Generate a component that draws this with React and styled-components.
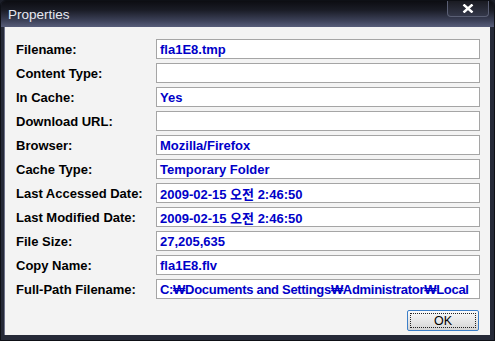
import React from 'react';
import styled, { createGlobalStyle } from 'styled-components';

const GlobalStyle = createGlobalStyle`
  html, body {
    margin: 0;
    padding: 0;
    background: #1c1f2a;
  }
`;

const fields = [
  { label: 'Filename:', value: 'fla1E8.tmp' },
  { label: 'Content Type:', value: '' },
  { label: 'In Cache:', value: 'Yes' },
  { label: 'Download URL:', value: '' },
  { label: 'Browser:', value: 'Mozilla/Firefox' },
  { label: 'Cache Type:', value: 'Temporary Folder' },
  { label: 'Last Accessed Date:', value: '2009-02-15 오전 2:46:50' },
  { label: 'Last Modified Date:', value: '2009-02-15 오전 2:46:50' },
  { label: 'File Size:', value: '27,205,635' },
  { label: 'Copy Name:', value: 'fla1E8.flv' },
  { label: 'Full-Path Filename:', value: 'C:₩Documents and Settings₩Administrator₩Local', condensed: true },
];

function App() {
  return (
    <>
      <GlobalStyle />
      <Window>
        <TitleBar>
          <Title>Properties</Title>
          <CloseButton>
            <svg width="12" height="9" viewBox="0 0 12 9">
              <path d="M1.5 0.5 L10.5 8.5 M10.5 0.5 L1.5 8.5" stroke="#fff" strokeWidth="2.4" />
            </svg>
          </CloseButton>
        </TitleBar>
        <Body>
          <FieldGrid>
            {fields.map((f) => (
              <React.Fragment key={f.label}>
                <Label>{f.label}</Label>
                <ValueBox $condensed={f.condensed}>{f.value}</ValueBox>
              </React.Fragment>
            ))}
          </FieldGrid>
          <Footer>
            <OkButton>
              <span>OK</span>
            </OkButton>
          </Footer>
        </Body>
      </Window>
    </>
  );
}

export default App;

const Window = styled.div`
  width: 495px;
  height: 341px;
  box-sizing: border-box;
  display: flex;
  flex-direction: column;
  background: #262a38;
  border: 1px solid #0e1016;
  border-radius: 6px 6px 0 0;
  overflow: hidden;
  font-family: 'Liberation Sans', 'Noto Sans CJK KR', sans-serif;
`;

const TitleBar = styled.div`
  height: 26px;
  flex: none;
  display: flex;
  align-items: flex-start;
  justify-content: space-between;
  background: linear-gradient(to bottom, #0c0d12 0%, #1a1c26 35%, #3c4158 75%, #575d7a 100%);
  padding: 0 5px 0 7px;
`;

const Title = styled.span`
  margin-top: 6px;
  color: #e6e8f0;
  font-size: 13.5px;
`;

const CloseButton = styled.div`
  width: 42px;
  height: 16px;
  box-sizing: border-box;
  display: flex;
  align-items: center;
  justify-content: center;
  background: linear-gradient(to bottom, #1a1b22, #34384a);
  border: 1px solid #5a5f74;
  border-top: none;
  border-radius: 0 0 4px 4px;
`;

const Body = styled.div`
  flex: 1;
  margin: 0 4px 5px 3px;
  background: #f3f3f3;
  border-left: 1px solid #6c7088;
  display: flex;
  flex-direction: column;
  padding: 12px 9px 0 11px;
`;

const FieldGrid = styled.div`
  display: grid;
  grid-template-columns: 140px 324px;
  grid-auto-rows: 20px;
  row-gap: 4px;
`;

const Label = styled.div`
  display: flex;
  align-items: center;
  font-size: 13px;
  font-weight: bold;
  color: #000;
`;

const ValueBox = styled.div`
  box-sizing: border-box;
  background: #fff;
  border: 1px solid #a5a5a5;
  display: flex;
  align-items: center;
  padding-left: 3px;
  font-size: 13px;
  font-weight: bold;
  color: #0000c8;
  letter-spacing: ${(p) => (p.$condensed ? '-0.3px' : '0')};
  white-space: nowrap;
  overflow: hidden;
`;

const Footer = styled.div`
  display: flex;
  justify-content: flex-end;
  margin-top: 11px;
  padding-right: 2px;
`;

const OkButton = styled.div`
  width: 72px;
  height: 21px;
  box-sizing: border-box;
  border: 1px solid #3c7fc8;
  border-radius: 2px;
  background: linear-gradient(to bottom, #fafafa, #e4e4e4 60%, #d4d4d4);
  padding: 2px;
  display: flex;
  span {
    flex: 1;
    border: 1px dotted #222;
    display: flex;
    align-items: center;
    justify-content: center;
    font-size: 12.5px;
    color: #000;
  }
`;
